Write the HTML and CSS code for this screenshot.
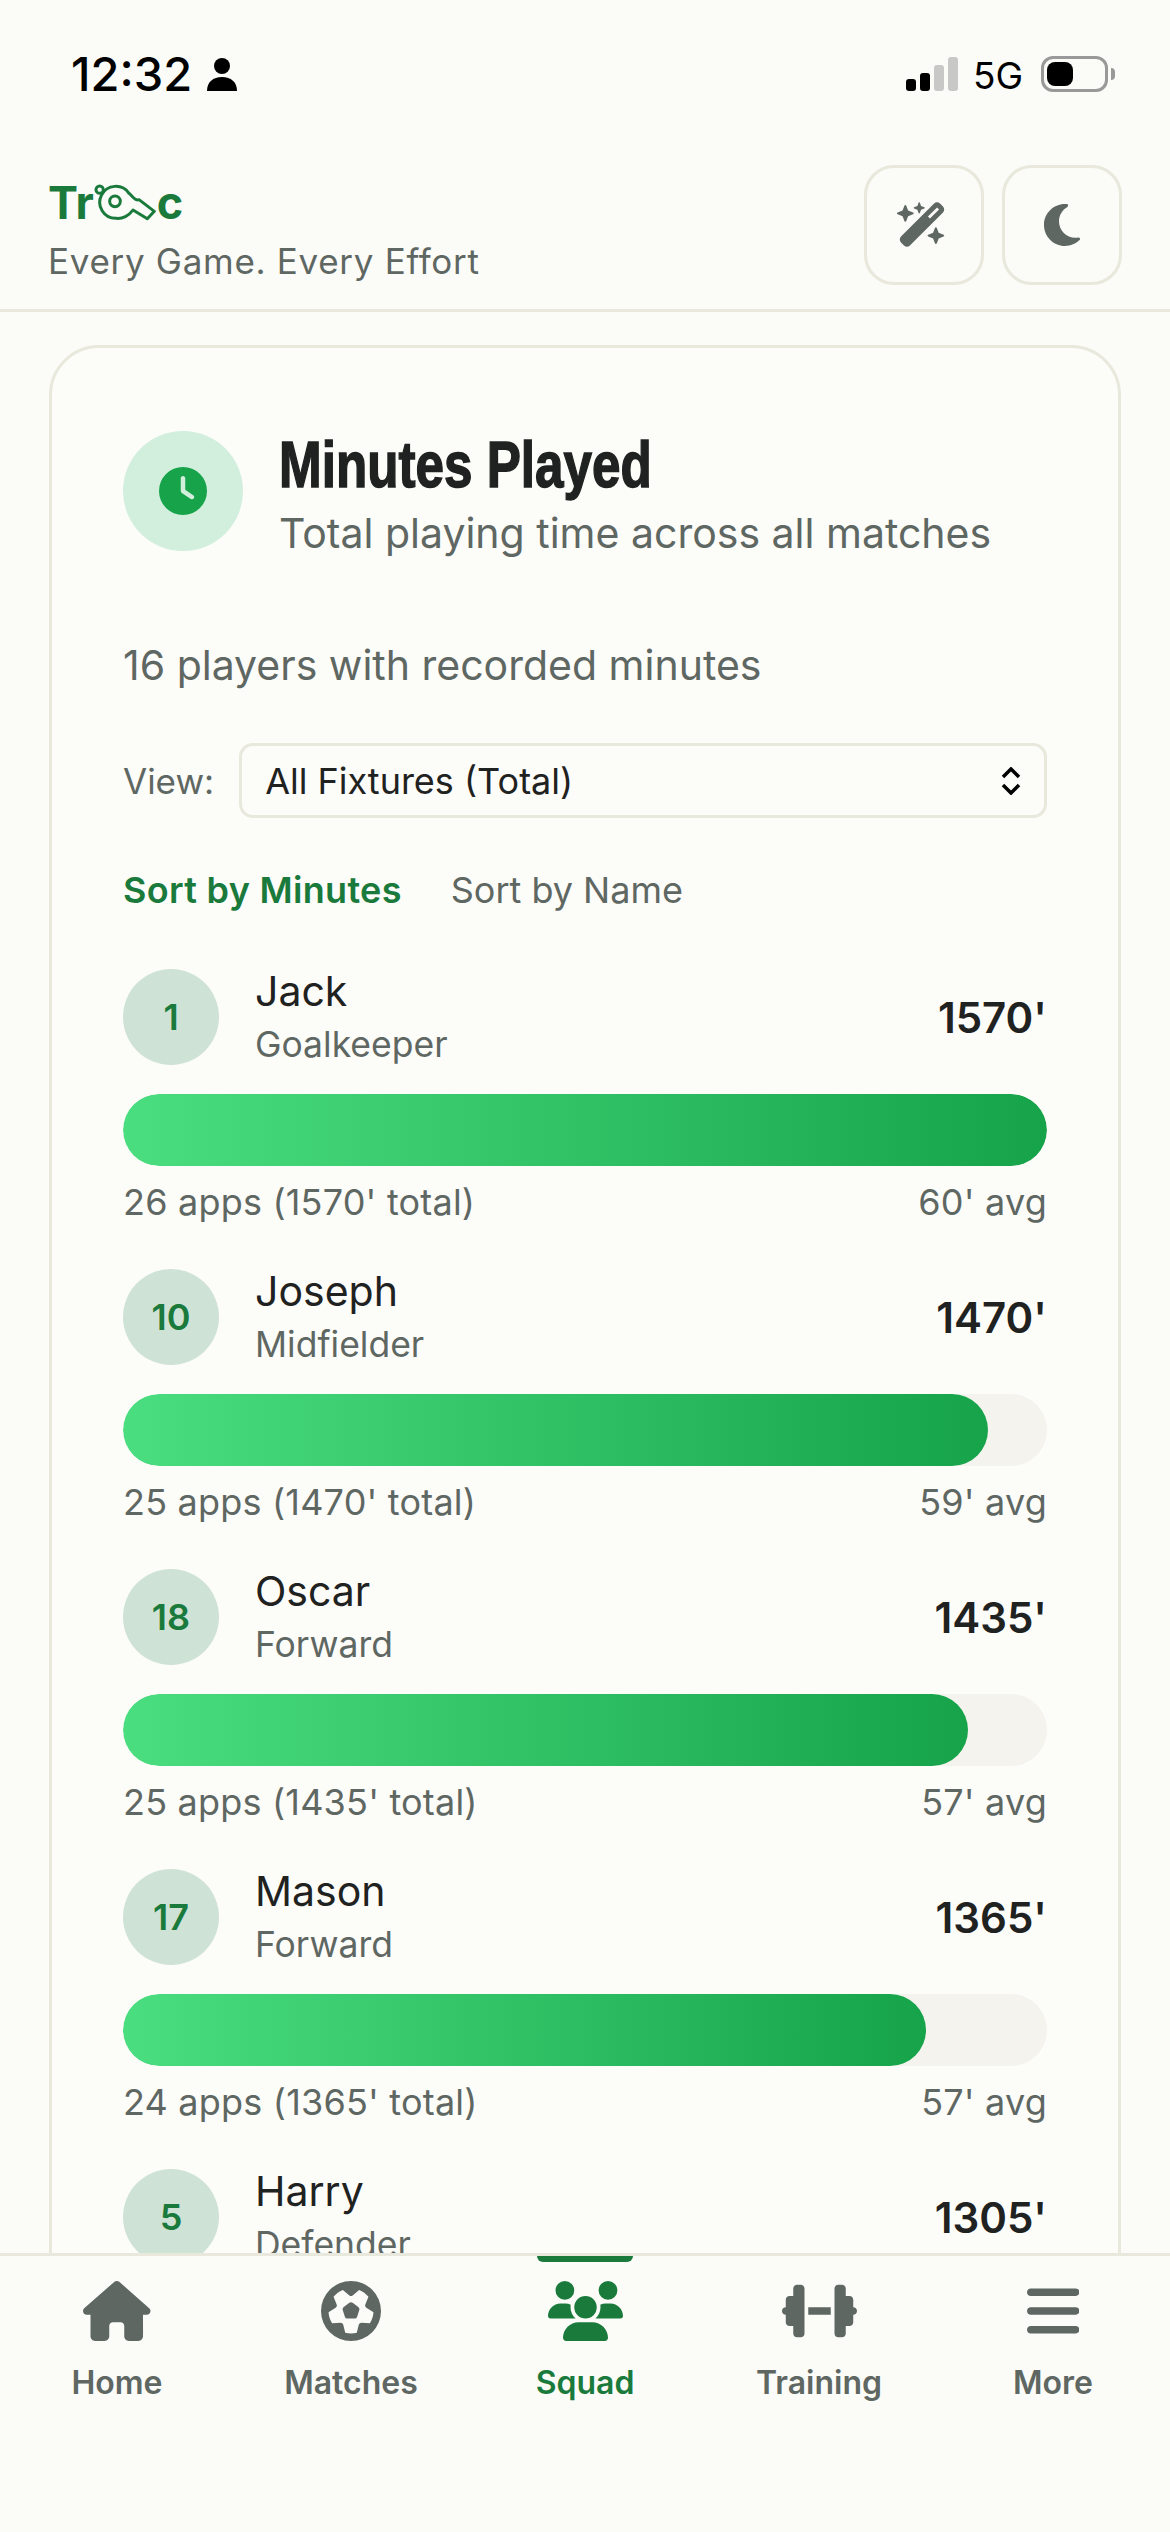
FILE: index.html
```html
<!DOCTYPE html>
<html>
<head>
    <title>Minutes Played</title>
    <meta charset="utf-8">
    <link rel="stylesheet" href="styles.css">
</head>
<body>
<div class="page">
    <div class="status-bar">
        <div class="status-left">
            <span class="time">12:32</span>
            <svg class="person" viewBox="0 0 30 33"><circle cx="15" cy="8" r="8"/><path d="M0 33c0-9 6-14 15-14s15 5 15 14z"/></svg>
        </div>
        <div class="status-right">
            <div class="signal">
                <span class="sig sig1"></span>
                <span class="sig sig2"></span>
                <span class="sig sig3"></span>
                <span class="sig sig4"></span>
            </div>
            <span class="net">5G</span>
            <div class="battery"><span class="battery-fill"></span></div>
            <span class="battery-nub"></span>
        </div>
    </div>

    <header class="app-header">
        <div class="brand">
            <div class="logo">Tr<svg class="whistle" viewBox="195 97 186 114"><path d="M330 147L376 182L355 204L312 178C300 195 280 205 262 203A48 48 0 1 1 300 128C310 135 318 152 330 147Z"/><circle cx="258" cy="152" r="16"/><circle cx="212" cy="117" r="11"/></svg>c</div>
            <div class="tagline">Every Game. Every Effort</div>
        </div>
        <div class="header-actions">
            <button class="icon-btn"><svg class="wand" viewBox="0 0 576 512"><path d="M234.7 42.7L197 56.8c-3 1.1-5 4-5 7.2s2 6.1 5 7.2l37.7 14.1L248.8 123c1.1 3 4 5 7.2 5s6.1-2 7.2-5l14.1-37.7L315 71.2c3-1.1 5-4 5-7.2s-2-6.1-5-7.2L277.3 42.7 263.2 5c-1.1-3-4-5-7.2-5s-6.1 2-7.2 5L234.7 42.7zM46.1 395.4c-18.7 18.7-18.7 49.1 0 67.9l34.6 34.6c18.7 18.7 49.1 18.7 67.9 0L529.9 116.5c18.7-18.7 18.7-49.1 0-67.9L495.3 14.1c-18.7-18.7-49.1-18.7-67.9 0L46.1 395.4zM484.6 82.6l-105 105-23.3-23.3 105-105 23.3 23.3zM7.5 117.2C3 118.9 0 123.2 0 128s3 9.1 7.5 10.8L64 160l21.2 56.5c1.7 4.5 6 7.5 10.8 7.5s9.1-3 10.8-7.5L128 160l56.5-21.2c4.5-1.7 7.5-6 7.5-10.8s-3-9.1-7.5-10.8L128 96 106.8 39.5C105.1 35 100.8 32 96 32s-9.1 3-10.8 7.5L64 96 7.5 117.2zm352 256c-4.5 1.7-7.5 6-7.5 10.8s3 9.1 7.5 10.8L416 416l21.2 56.5c1.7 4.5 6 7.5 10.8 7.5s9.1-3 10.8-7.5L480 416l56.5-21.2c4.5-1.7 7.5-6 7.5-10.8s-3-9.1-7.5-10.8L480 352l-21.2-56.5c-1.7-4.5-6-7.5-10.8-7.5s-9.1 3-10.8 7.5L416 352l-56.5 21.2z"/></svg></button>
            <button class="icon-btn"><svg class="moon" viewBox="0 0 384 512"><path d="M223.5 32C100 32 0 132.3 0 256S100 480 223.5 480c60.6 0 115.5-24.2 155.8-63.4c5-4.9 6.3-12.5 3.1-18.7s-10.1-9.7-17-8.5c-9.8 1.7-19.8 2.6-30.1 2.6c-96.9 0-175.5-78.8-175.5-176c0-65.8 36-123.1 89.3-153.3c6.1-3.5 9.2-10.5 7.7-17.3s-7.3-11.9-14.3-12.5c-6.3-.5-12.6-.8-19-.8z"/></svg></button>
        </div>
    </header>

    <main class="content">
        <section class="card">
            <div class="card-head">
                <div class="head-icon"><svg viewBox="0 0 512 512"><path d="M256 0a256 256 0 1 1 0 512A256 256 0 1 1 256 0zM232 120V256c0 8 4 15.5 10.7 20l96 64c11 7.4 25.9 4.4 33.3-6.7s4.4-25.9-6.7-33.3L280 243.2V120c0-13.3-10.7-24-24-24s-24 10.7-24 24z"/></svg></div>
                <div>
                    <h1 class="card-title">Minutes Played</h1>
                    <p class="card-sub">Total playing time across all matches</p>
                </div>
            </div>

            <p class="count">16 players with recorded minutes</p>

            <div class="view-row">
                <span class="view-label">View:</span>
                <div class="select">
                    <span>All Fixtures (Total)</span>
                    <svg class="chevrons" viewBox="0 0 20 28"><path d="M2 10l8-8 8 8M2 18l8 8 8-8"/></svg>
                </div>
            </div>

            <div class="sort-row">
                <span class="sort active">Sort by Minutes</span>
                <span class="sort">Sort by Name</span>
            </div>

            <div class="players">
                <div class="player">
                    <div class="player-top">
                        <div class="avatar">1</div>
                        <div class="player-info">
                            <div class="player-name">Jack</div>
                            <div class="player-role">Goalkeeper</div>
                        </div>
                        <div class="player-mins">1570'</div>
                    </div>
                    <div class="track"><div class="fill" style="width: 100%"></div></div>
                    <div class="player-foot"><span>26 apps (1570' total)</span><span>60' avg</span></div>
                </div>

                <div class="player">
                    <div class="player-top">
                        <div class="avatar">10</div>
                        <div class="player-info">
                            <div class="player-name">Joseph</div>
                            <div class="player-role">Midfielder</div>
                        </div>
                        <div class="player-mins">1470'</div>
                    </div>
                    <div class="track"><div class="fill" style="width: 93.6%"></div></div>
                    <div class="player-foot"><span>25 apps (1470' total)</span><span>59' avg</span></div>
                </div>

                <div class="player">
                    <div class="player-top">
                        <div class="avatar">18</div>
                        <div class="player-info">
                            <div class="player-name">Oscar</div>
                            <div class="player-role">Forward</div>
                        </div>
                        <div class="player-mins">1435'</div>
                    </div>
                    <div class="track"><div class="fill" style="width: 91.4%"></div></div>
                    <div class="player-foot"><span>25 apps (1435' total)</span><span>57' avg</span></div>
                </div>

                <div class="player">
                    <div class="player-top">
                        <div class="avatar">17</div>
                        <div class="player-info">
                            <div class="player-name">Mason</div>
                            <div class="player-role">Forward</div>
                        </div>
                        <div class="player-mins">1365'</div>
                    </div>
                    <div class="track"><div class="fill" style="width: 86.9%"></div></div>
                    <div class="player-foot"><span>24 apps (1365' total)</span><span>57' avg</span></div>
                </div>

                <div class="player">
                    <div class="player-top">
                        <div class="avatar">5</div>
                        <div class="player-info">
                            <div class="player-name">Harry</div>
                            <div class="player-role">Defender</div>
                        </div>
                        <div class="player-mins">1305'</div>
                    </div>
                </div>
            </div>
        </section>
    </main>

    <nav class="tab-bar">
        <a class="tab">
            <svg class="tab-icon" viewBox="0 0 576 512"><path d="M575.8 255.5c0 18-15 32.1-32 32.1h-32l.7 160.2c0 2.7-.2 5.4-.5 8.1V472c0 22.1-17.9 40-40 40H456c-1.1 0-2.2 0-3.3-.1c-1.4 .1-2.8 .1-4.2 .1H416 392c-22.1 0-40-17.9-40-40V448 384c0-17.7-14.3-32-32-32H256c-17.7 0-32 14.3-32 32v64 24c0 22.1-17.9 40-40 40H160 128.1c-1.5 0-3-.1-4.5-.2c-1.2 .1-2.4 .2-3.6 .2H104c-22.1 0-40-17.9-40-40V360c0-.9 0-1.9 .1-2.8V287.6H32c-18 0-32-14-32-32.1c0-9 3-17 10-24L266.4 8c7-7 15-8 22-8s15 2 21 7L564.8 231.5c8 7 12 15 11 24z"/></svg>
            <span>Home</span>
        </a>
        <a class="tab">
            <svg class="tab-icon" viewBox="0 0 512 512"><path d="M417.3 360.1l-71.6-4.8c-5.2-.3-10.3 1.1-14.5 4.2s-7.2 7.4-8.4 12.5l-17.6 69.6C289.5 445.8 273 448 256 448s-33.5-2.2-49.2-6.4L189.2 372c-1.3-5-4.3-9.4-8.4-12.5s-9.3-4.5-14.5-4.2l-71.6 4.8c-17.6-27.2-28.5-59.2-30.4-93.6L125 228.3c4.4-2.8 7.6-7 9.2-11.9s1.4-10.2-.5-15l-26.7-66.6C128 109.2 155.3 89 186.7 76.9l55.2 46c4 3.3 9 5.1 14.1 5.1s10.2-1.8 14.1-5.1l55.2-46c31.3 12.1 58.7 32.3 79.6 57.9l-26.7 66.6c-1.9 4.8-2.1 10.1-.5 15s4.9 9.1 9.2 11.9l60.7 38.2c-1.9 34.4-12.8 66.4-30.4 93.6zM256 512A256 256 0 1 0 256 0a256 256 0 1 0 0 512zm14.1-325.7c-8.4-6.1-19.8-6.1-28.2 0L194 221c-8.4 6.1-11.9 16.9-8.7 26.8l18.3 56.3c3.2 9.9 12.4 16.6 22.8 16.6h59.2c10.4 0 19.6-6.7 22.8-16.6l18.3-56.3c3.2-9.9-.3-20.7-8.7-26.8l-47.9-34.8z"/></svg>
            <span>Matches</span>
        </a>
        <a class="tab active">
            <svg class="tab-icon" viewBox="0 0 640 512"><path d="M144 0a80 80 0 1 1 0 160A80 80 0 1 1 144 0zM512 0a80 80 0 1 1 0 160A80 80 0 1 1 512 0zM0 298.7C0 239.8 47.8 192 106.7 192h42.7c15.9 0 31 3.5 44.6 9.7c-1.3 7.2-1.9 14.7-1.9 22.3c0 38.2 16.8 72.5 43.3 96c-.2 0-.4 0-.7 0H21.3C9.6 320 0 310.4 0 298.7zM405.3 320c-.2 0-.4 0-.7 0c26.6-23.5 43.3-57.8 43.3-96c0-7.6-.7-15-1.9-22.3c13.6-6.3 28.7-9.7 44.6-9.7h42.7C592.2 192 640 239.8 640 298.7c0 11.8-9.6 21.3-21.3 21.3H405.3zM224 224a96 96 0 1 1 192 0 96 96 0 1 1 -192 0zM128 485.3C128 411.7 187.7 352 261.3 352H378.7C452.3 352 512 411.7 512 485.3c0 14.7-11.9 26.7-26.7 26.7H154.7c-14.7 0-26.7-11.9-26.7-26.7z"/></svg>
            <span>Squad</span>
        </a>
        <a class="tab">
            <svg class="tab-icon" viewBox="0 0 640 512"><path d="M96 64c0-17.7 14.3-32 32-32h32c17.7 0 32 14.3 32 32V224v64V448c0 17.7-14.3 32-32 32H128c-17.7 0-32-14.3-32-32V384H64c-17.7 0-32-14.3-32-32V288c-17.7 0-32-14.3-32-32s14.3-32 32-32V160c0-17.7 14.3-32 32-32H96V64zm448 0v64h32c17.7 0 32 14.3 32 32v64c17.7 0 32 14.3 32 32s-14.3 32-32 32v64c0 17.7-14.3 32-32 32H544v64c0 17.7-14.3 32-32 32H480c-17.7 0-32-14.3-32-32V288 224 64c0-17.7 14.3-32 32-32h32c17.7 0 32 14.3 32 32zM416 224v64H224V224H416z"/></svg>
            <span>Training</span>
        </a>
        <a class="tab">
            <svg class="tab-icon" viewBox="0 0 448 512"><path d="M0 96C0 78.3 14.3 64 32 64H416c17.7 0 32 14.3 32 32s-14.3 32-32 32H32C14.3 128 0 113.7 0 96zM0 256c0-17.7 14.3-32 32-32H416c17.7 0 32 14.3 32 32s-14.3 32-32 32H32c-17.7 0-32-14.3-32-32zM448 416c0 17.7-14.3 32-32 32H32c-17.7 0-32-14.3-32-32s14.3-32 32-32H416c17.7 0 32 14.3 32 32z"/></svg>
            <span>More</span>
        </a>
    </nav>
</div>
</body>
</html>
```

FILE: styles.css
```css
* {
    box-sizing: border-box;
}
body {
    margin: 0;
    background: #fbfbf7;
    font-family: "Inter", "Liberation Sans", sans-serif;
    color: #1f2220;
}
.page {
    width: 1170px;
    height: 2532px;
    display: flex;
    flex-direction: column;
    overflow: hidden;
}

/* status bar */
.status-bar {
    height: 140px;
    flex: none;
    display: flex;
    justify-content: space-between;
    padding: 54px 55px 0 71px;
}
.status-left {
    display: flex;
    align-items: flex-start;
    gap: 15px;
}
.time {
    font-size: 47px;
    font-weight: 500;
    line-height: 40px;
    color: #000;
}
.person {
    width: 30px;
    height: 33px;
    margin-top: 4px;
}
.status-right {
    display: flex;
    align-items: flex-start;
}
.signal {
    display: flex;
    align-items: flex-end;
    gap: 4px;
    height: 34px;
    margin: 3px 15px 0 0;
}
.sig {
    width: 10px;
    border-radius: 3px;
    background: #000;
}
.sig1 { height: 12px; }
.sig2 { height: 18px; }
.sig3 { height: 26px; background: #c8c8c6; }
.sig4 { height: 34px; background: #c8c8c6; }
.net {
    font-size: 37px;
    line-height: 38px;
    color: #000;
    margin: 3px 18px 0 0;
}
.battery {
    width: 67px;
    height: 36px;
    margin-top: 2px;
    border: 3px solid #999;
    border-radius: 12px;
    padding: 3px;
}
.battery-fill {
    display: block;
    width: 26px;
    height: 24px;
    background: #000;
    border-radius: 8px;
}
.battery-nub {
    width: 4px;
    height: 12px;
    margin: 14px 0 0 3px;
    background: #999;
    border-radius: 0 4px 4px 0;
}

/* header */
.app-header {
    height: 172px;
    flex: none;
    display: flex;
    justify-content: space-between;
    align-items: center;
    padding: 0 48px;
    border-bottom: 3px solid #e8e8dc;
}
.brand {
    padding-top: 13px;
}
.logo {
    display: flex;
    align-items: center;
    height: 44px;
    font-size: 45px;
    font-weight: 700;
    color: #1a7a3c;
    line-height: 44px;
}
.whistle {
    width: 62px;
    height: 38px;
    margin: -2px 1px 0 0;
    fill: none;
    stroke: #1a7a3c;
    stroke-width: 9;
    stroke-linejoin: round;
}
.tagline {
    margin-top: 15px;
    font-size: 35px;
    line-height: 42px;
    color: #5f6763;
    letter-spacing: 0.7px;
}
.header-actions {
    display: flex;
    gap: 18px;
}
.icon-btn {
    width: 120px;
    height: 120px;
    padding: 0;
    display: flex;
    align-items: center;
    justify-content: center;
    background: transparent;
    border: 3px solid #e8e8dc;
    border-radius: 30px;
}
.icon-btn svg {
    fill: #5f6763;
}
.wand {
    width: 50px;
    height: 45px;
    margin-right: 4px;
}
.moon {
    width: 36px;
    height: 48px;
}

/* card */
.content {
    flex: 1;
    min-height: 0;
    overflow: hidden;
    padding: 33px 49px 0;
}
.card {
    background: #fcfcf9;
    border: 3px solid #e8e8dc;
    border-radius: 50px;
    padding: 83px 71px 0;
    height: 2000px;
}
.card-head {
    display: flex;
    align-items: flex-start;
    gap: 36px;
}
.head-icon {
    width: 120px;
    height: 120px;
    flex: none;
    border-radius: 50%;
    background: #d1efdc;
    display: flex;
    align-items: center;
    justify-content: center;
}
.head-icon svg {
    width: 48px;
    height: 48px;
    fill: #16a34a;
}
.card-title {
    margin: 0;
    font-family: "Liberation Sans", sans-serif;
    font-size: 64px;
    font-weight: 700;
    line-height: 68px;
    color: #1f2220;
    -webkit-text-stroke: 1.5px #1f2220;
    transform: scaleX(0.8);
    transform-origin: left center;
}
.card-sub {
    margin: 8px 0 0;
    font-size: 41px;
    line-height: 52px;
    color: #5f6763;
}
.count {
    margin: 82px 0 0;
    font-size: 41px;
    line-height: 48px;
    color: #5f6763;
}
.view-row {
    display: flex;
    align-items: center;
    gap: 25px;
    margin-top: 54px;
}
.view-label {
    font-size: 35px;
    color: #5f6763;
}
.select {
    flex: 1;
    height: 75px;
    display: flex;
    align-items: center;
    justify-content: space-between;
    padding: 0 23px;
    border: 3px solid #e8e8dc;
    border-radius: 14px;
    font-size: 36px;
}
.chevrons {
    width: 20px;
    height: 28px;
    fill: none;
    stroke: #000;
    stroke-width: 3.5;
}
.sort-row {
    display: flex;
    gap: 49px;
    margin-top: 49px;
    font-size: 36px;
    line-height: 46px;
}
.sort {
    color: #5f6763;
}
.sort.active {
    color: #1a7a3c;
    font-weight: 600;
    letter-spacing: 0.3px;
}

/* player rows */
.players {
    padding-top: 11px;
}
.player {
    margin-top: 45px;
}
.player-top {
    display: flex;
    align-items: center;
    height: 96px;
}
.avatar {
    width: 96px;
    height: 96px;
    flex: none;
    border-radius: 50%;
    background: #cfe2d6;
    color: #1a7a3c;
    font-size: 36px;
    font-weight: 600;
    display: flex;
    align-items: center;
    justify-content: center;
}
.player-info {
    flex: 1;
    margin-left: 36px;
}
.player-name {
    font-size: 41px;
    line-height: 50px;
}
.player-role {
    margin-top: 6px;
    font-size: 35.5px;
    line-height: 46px;
    color: #5f6763;
}
.player-mins {
    font-size: 42px;
    font-weight: 600;
}
.track {
    height: 72px;
    margin-top: 29px;
    background: #f4f3ee;
    border-radius: 36px;
    overflow: hidden;
}
.fill {
    height: 100%;
    border-radius: 36px;
    background: linear-gradient(90deg, #4ade80, #16a34a);
}
.player-foot {
    display: flex;
    justify-content: space-between;
    margin-top: 14px;
    font-size: 36px;
    letter-spacing: 0.2px;
    line-height: 44px;
    color: #5f6763;
}

/* bottom tabs */
.tab-bar {
    height: 279px;
    flex: none;
    display: flex;
    background: #fbfcf8;
    border-top: 3px solid #e8e8dc;
}
.tab {
    position: relative;
    flex: 1;
    display: flex;
    flex-direction: column;
    align-items: center;
    padding-top: 25px;
    color: #5f6763;
    font-size: 32px;
    font-weight: 600;
}
.tab-icon {
    height: 60px;
    fill: currentColor;
    margin-bottom: 22px;
}
.tab.active {
    color: #1a7a3c;
}
.tab.active::before {
    content: "";
    position: absolute;
    top: 0;
    left: 50%;
    width: 96px;
    height: 6px;
    margin-left: -48px;
    background: #1a7a3c;
    border-radius: 0 0 6px 6px;
}
```
